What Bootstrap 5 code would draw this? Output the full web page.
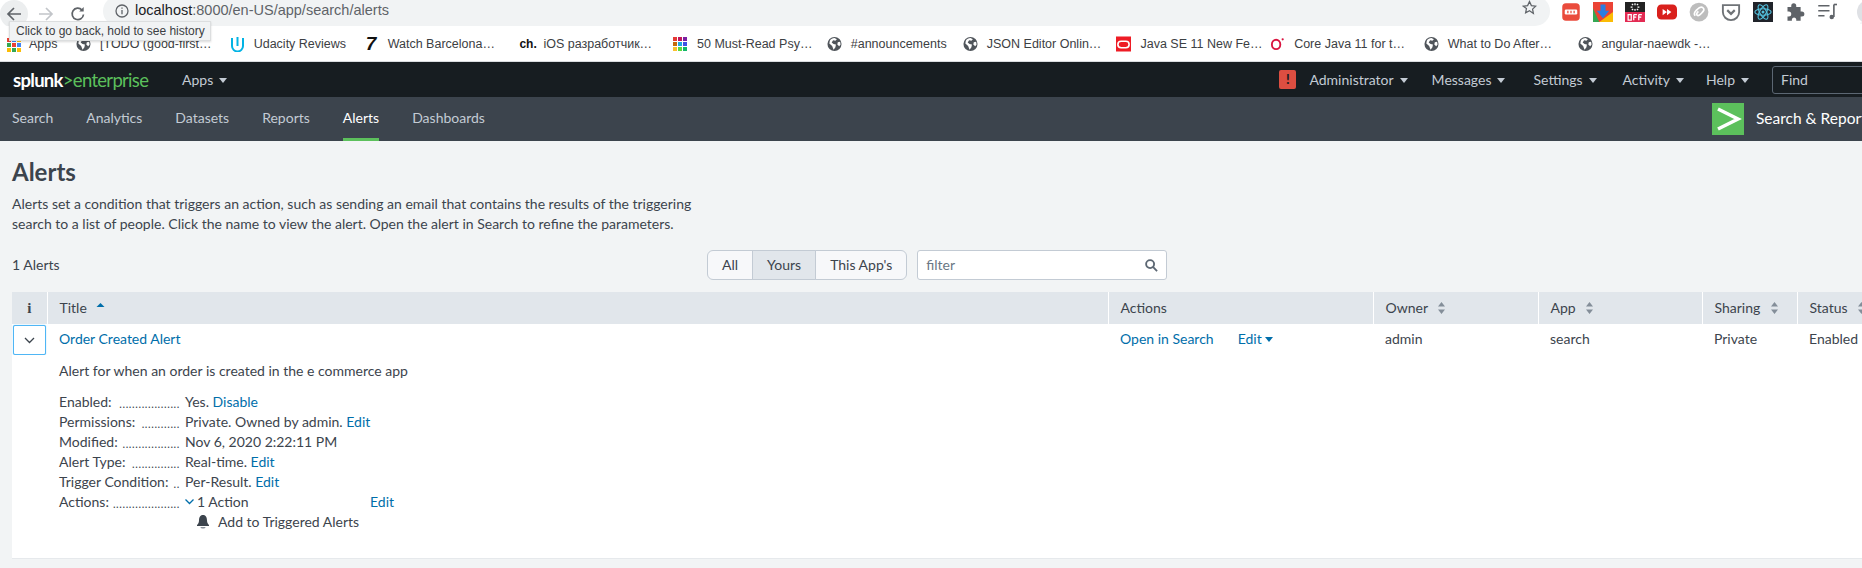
<!DOCTYPE html>
<html lang="en">
<head>
    <meta charset="UTF-8">
    <meta name="viewport" content="width=device-width, initial-scale=1.0">
    <title>Alerts</title>
    <link href="https://cdn.jsdelivr.net/npm/bootstrap@5.3.0/dist/css/bootstrap.min.css" rel="stylesheet">
    <style>
        html, body {
            overflow: hidden;
        }
        body {
            background-color: #f2f4f5;
            color: #3c444d;
            font-family: "Lato", "Liberation Sans", sans-serif;
            font-size: 14px;
            line-height: 20px;
            height: 568px;
        }
        a {
            color: #006eaa;
            text-decoration: none;
        }
        /* browser chrome */
        .browser-bar {
            height: 26px;
            background-color: #fff;
            overflow: hidden;
        }
        .nav-btn {
            width: 28px;
            height: 28px;
            border-radius: 50%;
            flex-shrink: 0;
        }
        .nav-btn-hover {
            background-color: #eceeef;
        }
        .omnibox {
            height: 30px;
            margin: -4px 0 0 11px;
            width: 1447px;
            padding: 4px 13px 0 12px;
            background-color: #f1f3f4;
            border-radius: 15px;
            font-family: "Liberation Sans", sans-serif;
            font-size: 14.5px;
            color: #5f6368;
            flex-shrink: 0;
        }
        .omnibox b {
            font-weight: 400;
            color: #202124;
        }
        .omni-info {
            margin-right: 6px;
        }
        .ext-icons {
            margin-left: 11px;
            gap: 12px;
        }
        .back-tip {
            position: absolute;
            left: 9px;
            top: 21px;
            height: 20px;
            width: 202px;
            padding-left: 6px;
            background-color: #f1f3f4;
            border: 1px solid #dcdedf;
            box-shadow: 0 1px 2px rgba(0, 0, 0, .15);
            font-family: "Liberation Sans", sans-serif;
            font-size: 12px;
            line-height: 18px;
            color: #3c4043;
            white-space: nowrap;
        }
        .bookmarks {
            height: 36px;
            background-color: #fff;
            border-bottom: 1px solid #dadce0;
            padding-left: 7px;
            font-family: "Liberation Sans", sans-serif;
            font-size: 12.5px;
            color: #3c4043;
            white-space: nowrap;
        }
        .bm-item {
            width: 153.7px;
            flex-shrink: 0;
            gap: 9px;
        }
        .bm-apps {
            width: 69px;
            gap: 7px;
        }
        .bm-short { width: 136px; }
        .bm-ico {
            width: 15px;
            height: 16px;
            flex-shrink: 0;
        }
        .bm-seven {
            font-family: "Liberation Sans", sans-serif;
            font-weight: 700;
            font-style: italic;
            font-size: 19px;
            color: #111;
            line-height: 16px;
            margin-right: -2px;
        }
        .bm-ch {
            font-weight: 700;
            font-size: 12px;
            color: #111;
            line-height: 16px;
        }
        /* splunk bars */
        .wide-page {
            width: 1900px;
        }
        .top-bar {
            height: 35px;
            background-color: #171d21;
            color: #c3cbd4;
            font-size: 14px;
            padding-left: 13px;
        }
        .splunk-logo {
            width: 169px;
            color: #5cc05c;
            font-size: 18.5px;
            letter-spacing: -.7px;
            font-family: "Lato", sans-serif;
        }
        .splunk-logo span {
            color: #fff;
            font-weight: 700;
        }
        .caret-down {
            display: inline-block;
            border-left: 4px solid transparent;
            border-right: 4px solid transparent;
            border-top: 5px solid currentColor;
            margin-left: 6px;
            vertical-align: 2px;
        }
        .top-right {
            margin-left: auto;
        }
        .top-item {
            margin-right: 24px;
        }
        .top-item-messages {
            margin-right: 28px;
        }
        .top-item-settings {
            margin-right: 26px;
        }
        .top-item-activity {
            margin-right: 22px;
        }
        .top-item-help {
            margin-right: 23px;
        }
        .alert-flag {
            width: 17px;
            height: 19px;
            border-radius: 2px;
            background-color: #dc4e41;
            color: #171d21;
            font-weight: 900;
            font-size: 13px;
            line-height: 19px;
            text-align: center;
            margin-right: 13px;
        }
        .find-box {
            width: 128px;
            height: 28px;
            border: 1px solid #5c6773;
            border-radius: 3px;
            padding: 3px 8px;
            color: #c3cbd4;
            background-color: #171d21;
        }
        .app-bar {
            height: 44px;
            background-color: #3c444d;
            color: #c3cbd4;
            padding-left: 12px;
            gap: 33px;
        }
        .app-link {
            color: #c3cbd4;
            height: 44px;
            line-height: 42px;
            display: block;
        }
        .app-link-on {
            color: #fff;
            border-bottom: 3px solid #5cc05c;
        }
        .app-label {
            margin-left: auto;
            color: #fff;
            font-size: 15.5px;
            gap: 12px;
            width: 188px;
            white-space: nowrap;
        }
        .app-label span {
            margin-top: -2px;
        }
        .app-logo {
            width: 32px;
            height: 32px;
            background-color: #5cc05c;
            flex-shrink: 0;
        }
        /* page */
        .page-body {
            padding: 17px 0 0 12px;
        }
        .page-title {
            font-size: 24px;
            line-height: 28px;
            font-weight: 700;
            margin-bottom: 8px;
        }
        .page-intro {
            width: 700px;
            margin-bottom: 16px;
        }
        .filter-row {
            height: 30px;
            margin-bottom: 12px;
        }
        .alert-count {
            width: 695px;
        }
        .scope-btn {
            font-size: 14px;
            line-height: 18px;
            padding: 5px 14px;
            color: #3c444d;
            background-color: #f7f8fa;
            border: 1px solid #c3cbd4;
        }
        .scope-btn-on {
            background-color: #e1e6eb;
        }
        .filter-box {
            width: 250px;
            height: 30px;
            margin-left: 10px;
            padding: 0 8px;
            background-color: #fff;
            border: 1px solid #c3cbd4;
            border-radius: 3px;
            color: #6b7785;
        }
        .alerts-table {
            --bs-table-bg: #fff;
            --bs-table-color: #3c444d;
            table-layout: fixed;
            width: 1888px;
            margin: 0;
        }
        .alerts-table > thead > tr > th {
            background-color: #e1e6eb;
            height: 32px;
            padding: 6px 12px;
            font-weight: 400;
            border-bottom: 0;
            border-left: 1px solid #fff;
            white-space: nowrap;
            vertical-align: middle;
        }
        .alerts-table > thead > tr > th:first-child {
            border-left: 0;
            padding: 0;
            text-align: center;
        }
        .alerts-table > tbody > tr > td {
            border-bottom: 0;
            padding: 5px 12px 0;
        }
        .alerts-table > tbody > tr > td:first-child {
            padding: 1px 0 0 1px;
        }
        .col-info { width: 35px; }
        .col-title { width: 1061px; }
        .col-actions { width: 265px; }
        .col-owner { width: 165px; }
        .col-app { width: 164px; }
        .col-sharing { width: 95px; }
        .info-mark {
            font-family: "Liberation Serif", serif;
            font-weight: 700;
            font-size: 15px;
        }
        .sort-ico {
            margin-left: 6px;
            vertical-align: -1px;
        }
        .sort-ico-on {
            vertical-align: 1px;
        }
        .row-toggle {
            width: 33px;
            height: 30px;
            background-color: #fff;
            border: 1px solid #4fb6f5;
            border-radius: 2px;
            box-shadow: 0 0 1px #4fb6f5;
        }
        .alerts-table > tbody > tr.detail-row > td {
            height: 203px;
            padding: 6px 12px 0;
            box-shadow: none;
        }
        .alert-desc {
            margin-bottom: 11px;
        }
        .detail-line {
            height: 20px;
        }
        .detail-key {
            width: 121px;
            margin-right: 5px;
            white-space: nowrap;
        }
        .detail-dots {
            font-size: 11px;
            line-height: 1;
            letter-spacing: .6px;
            align-self: center;
            padding-top: 3px;
        }
        .action-value {
            width: 185px;
            gap: 3px;
        }
        .triggered {
            padding-left: 137px;
        }
        .edit-menu {
            margin-left: 24px;
        }
        .edit-menu .caret-down {
            margin-left: 3px;
        }
        .table-end {
            width: 1888px;
            height: 1px;
            background-color: #e6e9ec;
        }
    </style>
</head>
<body>
    <svg width="0" height="0" class="d-block position-absolute">
        <symbol id="globe" viewBox="0 0 16 16">
            <circle cx="8" cy="8" r="7.5" fill="#50555b"/>
            <path d="M8 1.5 10.5 3 9 4.5 6.5 4 5 6.5l2 1.5 2.500.500L9 11.500 7 14 5.500 10 2.500 7.500 3 4.500C4 2.500 6 1.500 8 1.500ZM11.500 6l2.500-.5.500 3-1.500 2L11 8.500Z" fill="#fff"/>
        </symbol>
    </svg>

    <!-- barra del navegador -->
    <div class="browser-bar d-flex align-items-start">
        <div class="nav-btn nav-btn-hover d-flex align-items-center justify-content-center">
            <svg width="16" height="16" viewBox="0 0 16 16" fill="none" stroke="#5f6368" stroke-width="1.700"><path d="M15 8H2M8 2 2 8l6 6"/></svg>
        </div>
        <div class="nav-btn ms-1 d-flex align-items-center justify-content-center">
            <svg width="16" height="16" viewBox="0 0 16 16" fill="none" stroke="#c2c5c9" stroke-width="1.700"><path d="M1 8h13M8 2l6 6-6 6"/></svg>
        </div>
        <div class="nav-btn ms-1 d-flex align-items-center justify-content-center">
            <svg width="16" height="16" viewBox="0 0 16 16" fill="none" stroke="#5f6368" stroke-width="1.700"><path d="M13.500 8.500A5.700 5.700 0 1 1 12 4"/><path d="M13.700 1v4.500H9.200" fill="#5f6368" stroke="none"/></svg>
        </div>
        <div class="omnibox d-flex align-items-start">
            <svg class="omni-info flex-shrink-0 mt-1" width="14" height="14" viewBox="0 0 14 14" fill="none" stroke="#5f6368" stroke-width="1.300"><circle cx="7" cy="7" r="6"/><path d="M7 6v4.200M7 3.500v1.300"/></svg>
            <span><b>localhost</b>:8000/en-US/app/search/alerts</span>
            <svg class="ms-auto flex-shrink-0" width="15" height="15" viewBox="0 0 24 24" fill="none" stroke="#5f6368" stroke-width="2"><path d="M12 2.500l3 6.400 7 .9-5.100 4.800 1.300 6.900L12 17.200l-6.200 3.300 1.300-6.900L2 9.800l7-.9z"/></svg>
        </div>
        <div class="ext-icons d-flex align-items-center">
            <svg width="20" height="20" viewBox="0 0 14 16"><rect y="1" width="14" height="14" rx="3" fill="#ea4b3c"/><rect x="2" y="6" width="10" height="4" rx="1" fill="#fff"/><path d="M4 7h1v2H4zM6.500 7h1v2h-1zM9 7h1v2H9z" fill="#ea4b3c"/></svg>
            <svg width="20" height="20" viewBox="0 0 16 16"><rect width="16" height="16" fill="#eb4335"/><path d="M0 5 5 16H0z" fill="#34a853"/><path d="M16 8v8H5z" fill="#fbbc05"/><path d="M6 2h4v5h3l-5 6-5-6h3z" fill="#2a7de1"/></svg>
            <svg width="20" height="20" viewBox="0 0 16 16"><rect width="16" height="8" fill="#222"/><rect y="8" width="16" height="8" fill="#e32a52"/><path d="M8 1v1.500M8 5.500V7M4.500 4H6M10 4h1.500M5.500 1.500l1 1M10.500 1.500l-1 1M5.500 6.500l1-1M10.500 6.500l-1-1" stroke="#fff"/><path d="M2.500 10h2.500v4.500H2.500zM7 10h2.500M7 10v4.500M7 12h2M11 10h2.500M11 10v4.500M11 12h2" stroke="#fff" fill="none"/></svg>
            <svg width="20" height="20" viewBox="0 0 16 16"><rect y="2" width="16" height="12" rx="3.500" fill="#d9201c"/><path d="M4.500 5.500 8 8l-3.500 2.500zM8 5.500 11.500 8 8 10.500z" fill="#fff"/></svg>
            <svg width="20" height="20" viewBox="0 0 16 16" fill="none"><circle cx="8" cy="8" r="7.500" fill="#bdbdbd"/><path d="M5 11c-1.500-1.500-.5-3 1-4.500S9 3 11 4.500s.5 3-1 4.500-2.500 2.500-3.500 1.500 0-2 1-3" stroke="#fff" stroke-width="1.400"/></svg>
            <svg width="20" height="20" viewBox="0 0 16 16" fill="none" stroke="#6f7377" stroke-width="1.500"><path d="M1.500 2.500h13v5.500a6.500 6.500 0 0 1-13 0z"/><path d="M5 6.500l3 3 3-3" stroke-width="1.700"/></svg>
            <svg width="20" height="20" viewBox="0 0 16 16" fill="none" stroke="#53c1de" stroke-width=".9"><rect width="16" height="16" fill="#20232a" stroke="none"/><ellipse cx="8" cy="8" rx="6.500" ry="2.600"/><ellipse cx="8" cy="8" rx="6.500" ry="2.600" transform="rotate(60 8 8)"/><ellipse cx="8" cy="8" rx="6.500" ry="2.600" transform="rotate(120 8 8)"/><circle cx="8" cy="8" r="1.200" fill="#53c1de" stroke="none"/></svg>
            <svg width="20" height="20" viewBox="0 0 16 16"><path d="M2 4h3V3a2 2 0 0 1 4 0v1h3.500v3.500h1a2 2 0 0 1 0 4h-1V15H9v-1.200a1.800 1.800 0 0 0-3.500 0V15H2v-3.500h1a2 2 0 0 0 0-4H2z" fill="#5f6368"/></svg>
            <svg width="20" height="20" viewBox="0 0 16 16" fill="none" stroke="#5f6368" stroke-width="1.300"><path d="M1 3h9M1 7h9M1 11h5M13.500 2v10"/><circle cx="11.800" cy="12" r="1.800" fill="#5f6368" stroke="none"/><path d="M13.500 2H16"/></svg>
            <svg class="flex-shrink-0 ms-2" width="24" height="24" viewBox="0 0 24 24"><circle cx="12" cy="12" r="12" fill="#dfe1e5"/><circle cx="12" cy="10" r="5" fill="#f3f4f5"/><path d="M3 24c1-7 17-7 18 0z" fill="#f3f4f5"/></svg>
        </div>
    </div>
    <div class="back-tip">Click to go back, hold to see history</div>

    <!-- marcadores -->
    <div class="bookmarks d-flex align-items-center">
        <div class="bm-item bm-apps d-flex align-items-center">
            <svg class="bm-ico" viewBox="0 0 15 16"><path d="M0 2h4v4H0z" fill="#ea4335"/><path d="M5 2h4v4H5z" fill="#4285f4"/><path d="M10 2h4v4h-4z" fill="#fbbc05"/><path d="M0 7h4v4H0z" fill="#34a853"/><path d="M5 7h4v4H5z" fill="#ea4335"/><path d="M10 7h4v4h-4z" fill="#4285f4"/><path d="M0 12h4v4H0z" fill="#fbbc05"/><path d="M5 12h4v4H5z" fill="#34a853"/><path d="M10 12h4v4h-4z" fill="#fbbc05"/></svg>
            <span>Apps</span>
        </div>
        <div class="bm-item d-flex align-items-center">
            <svg class="bm-ico"><use href="#globe"/></svg>
            <span>[TODO (good-first…</span>
        </div>
        <div class="bm-item bm-short d-flex align-items-center">
            <svg class="bm-ico" viewBox="0 0 15 16" fill="none" stroke="#02b3e4" stroke-width="2"><path d="M2 2v8a5.500 5.500 0 0 0 11 0V2"/><path d="M7.500 1v9"/></svg>
            <span>Udacity Reviews</span>
        </div>
        <div class="bm-item d-flex align-items-center">
            <span class="bm-ico bm-seven">7</span>
            <span>Watch Barcelona…</span>
        </div>
        <div class="bm-item d-flex align-items-center">
            <span class="bm-ico bm-ch">ch.</span>
            <span>iOS разработчик…</span>
        </div>
        <div class="bm-item d-flex align-items-center">
            <svg class="bm-ico" viewBox="0 0 15 16"><path d="M0 1h4v4H0z" fill="#e53935"/><path d="M5 1h4v4H5z" fill="#c2185b"/><path d="M10 1h4v4h-4z" fill="#7b1fa2"/><path d="M0 6h4v4H0z" fill="#c46a0a"/><path d="M5 6h4v4H5z" fill="#1ea7e1"/><path d="M10 6h4v4h-4z" fill="#3f51e5"/><path d="M0 11h4v4H0z" fill="#fbc02d"/><path d="M5 11h4v4H5z" fill="#5dd93b"/><path d="M10 11h4v4h-4z" fill="#12b76a"/></svg>
            <span>50 Must-Read Psy…</span>
        </div>
        <div class="bm-item bm-short d-flex align-items-center">
            <svg class="bm-ico"><use href="#globe"/></svg>
            <span>#announcements</span>
        </div>
        <div class="bm-item d-flex align-items-center">
            <svg class="bm-ico"><use href="#globe"/></svg>
            <span>JSON Editor Onlin…</span>
        </div>
        <div class="bm-item d-flex align-items-center">
            <svg class="bm-ico" viewBox="0 0 16 16"><rect width="16" height="16" fill="#ee1c25"/><rect x="2" y="5" width="12" height="7" rx="3.500" fill="none" stroke="#fff" stroke-width="1.700"/></svg>
            <span>Java SE 11 New Fe…</span>
        </div>
        <div class="bm-item d-flex align-items-center">
            <svg class="bm-ico" viewBox="0 0 16 16" fill="none" stroke="#d9143f" stroke-width="2"><ellipse cx="6.500" cy="8.500" rx="4.500" ry="5"/><circle cx="13.500" cy="3" r="1.200" fill="#d9143f" stroke="none"/></svg>
            <span>Core Java 11 for t…</span>
        </div>
        <div class="bm-item d-flex align-items-center">
            <svg class="bm-ico"><use href="#globe"/></svg>
            <span>What to Do After…</span>
        </div>
        <div class="bm-item d-flex align-items-center">
            <svg class="bm-ico"><use href="#globe"/></svg>
            <span>angular-naewdk -…</span>
        </div>
    </div>

    <div class="wide-page">
        <!-- barra superior de splunk -->
        <div class="top-bar d-flex align-items-center">
            <div class="splunk-logo"><span>splunk</span>&gt;enterprise</div>
            <div>Apps<i class="caret-down"></i></div>
            <div class="top-right d-flex align-items-center">
                <div class="alert-flag">!</div>
                <div class="top-item">Administrator<i class="caret-down"></i></div>
                <div class="top-item-messages">Messages<i class="caret-down"></i></div>
                <div class="top-item-settings">Settings<i class="caret-down"></i></div>
                <div class="top-item-activity">Activity<i class="caret-down"></i></div>
                <div class="top-item-help">Help<i class="caret-down"></i></div>
                <div class="find-box">Find</div>
            </div>
        </div>

        <div class="app-bar d-flex align-items-start">
            <a class="app-link" href="#">Search</a>
            <a class="app-link" href="#">Analytics</a>
            <a class="app-link" href="#">Datasets</a>
            <a class="app-link" href="#">Reports</a>
            <a class="app-link app-link-on" href="#">Alerts</a>
            <a class="app-link" href="#">Dashboards</a>
            <div class="app-label d-flex align-items-center h-100">
                <svg class="app-logo" viewBox="0 0 32 32" fill="none" stroke="#fff" stroke-width="3.500"><path d="M6 6 26 16 6 26"/></svg>
                <span>Search &amp; Reporting</span>
            </div>
        </div>

        <!-- contenido -->
        <div class="page-body">
            <h1 class="page-title">Alerts</h1>
            <p class="page-intro">Alerts set a condition that triggers an action, such as sending an email that contains the results of the triggering search to a list of people. Click the name to view the alert. Open the alert in Search to refine the parameters.</p>

            <div class="filter-row d-flex align-items-center">
                <div class="alert-count">1 Alerts</div>
                <div class="btn-group" role="group">
                    <button type="button" class="btn scope-btn">All</button>
                    <button type="button" class="btn scope-btn scope-btn-on">Yours</button>
                    <button type="button" class="btn scope-btn">This App's</button>
                </div>
                <div class="filter-box d-flex align-items-center justify-content-between">
                    <span>filter</span>
                    <svg width="13" height="13" viewBox="0 0 14 14" fill="none" stroke="#5c6773" stroke-width="2"><circle cx="5.500" cy="5.500" r="4.300"/><path d="M8.800 8.800 13 13"/></svg>
                </div>
            </div>

            <table class="table alerts-table">
                <thead>
                    <tr>
                        <th class="col-info"><span class="info-mark">i</span></th>
                        <th class="col-title">Title
                            <svg class="sort-ico sort-ico-on" width="9" height="10" viewBox="0 0 9 10"><path d="M4.500 1 8.500 5H.5z" fill="#006eaa"/></svg>
                        </th>
                        <th class="col-actions">Actions</th>
                        <th class="col-owner">Owner
                            <svg class="sort-ico" width="9" height="12" viewBox="0 0 9 12"><path d="M4.500 0 8 4.500H1zM4.500 12 1 7.500h7z" fill="#848e99"/></svg>
                        </th>
                        <th class="col-app">App
                            <svg class="sort-ico" width="9" height="12" viewBox="0 0 9 12"><path d="M4.500 0 8 4.500H1zM4.500 12 1 7.500h7z" fill="#848e99"/></svg>
                        </th>
                        <th class="col-sharing">Sharing
                            <svg class="sort-ico" width="9" height="12" viewBox="0 0 9 12"><path d="M4.500 0 8 4.500H1zM4.500 12 1 7.500h7z" fill="#848e99"/></svg>
                        </th>
                        <th>Status
                            <svg class="sort-ico" width="9" height="12" viewBox="0 0 9 12"><path d="M4.500 0 8 4.500H1zM4.500 12 1 7.500h7z" fill="#848e99"/></svg>
                        </th>
                    </tr>
                </thead>
                <tbody>
                    <tr>
                        <td>
                            <div class="row-toggle d-flex align-items-center justify-content-center">
                                <svg width="11" height="7" viewBox="0 0 11 7" fill="none" stroke="#3c444d" stroke-width="1.300"><path d="M1 1l4.500 4.500L10 1"/></svg>
                            </div>
                        </td>
                        <td><a href="#">Order Created Alert</a></td>
                        <td><a href="#">Open in Search</a><a href="#" class="edit-menu">Edit<i class="caret-down"></i></a></td>
                        <td>admin</td>
                        <td>search</td>
                        <td>Private</td>
                        <td>Enabled</td>
                    </tr>
                    <tr class="detail-row">
                        <td></td>
                        <td colspan="6">
                            <div class="alert-desc">Alert for when an order is created in the e commerce app</div>
                            <div class="detail-line d-flex"><div class="detail-key d-flex justify-content-between"><span>Enabled:</span><span class="detail-dots">...................</span></div><div>Yes. <a href="#">Disable</a></div></div>
                            <div class="detail-line d-flex"><div class="detail-key d-flex justify-content-between"><span>Permissions:</span><span class="detail-dots">............</span></div><div>Private. Owned by admin. <a href="#">Edit</a></div></div>
                            <div class="detail-line d-flex"><div class="detail-key d-flex justify-content-between"><span>Modified:</span><span class="detail-dots">..................</span></div><div>Nov 6, 2020 2:22:11 PM</div></div>
                            <div class="detail-line d-flex"><div class="detail-key d-flex justify-content-between"><span>Alert Type:</span><span class="detail-dots">...............</span></div><div>Real-time. <a href="#">Edit</a></div></div>
                            <div class="detail-line d-flex"><div class="detail-key d-flex justify-content-between"><span>Trigger Condition:</span><span class="detail-dots">..</span></div><div>Per-Result. <a href="#">Edit</a></div></div>
                            <div class="detail-line d-flex"><div class="detail-key d-flex justify-content-between"><span>Actions:</span><span class="detail-dots">.....................</span></div>
                                <div class="action-value d-flex align-items-center">
                                    <svg width="9" height="6" viewBox="0 0 9 6" fill="none" stroke="#006eaa" stroke-width="1.300"><path d="M.5.5l4 4 4-4"/></svg>
                                    <span>1 Action</span>
                                </div>
                                <a href="#">Edit</a>
                            </div>
                            <div class="triggered d-flex align-items-center">
                                <svg class="me-2" width="14" height="16" viewBox="0 0 14 16"><path d="M7 1c3 0 4 2.500 4 5.500 0 2 1 3.500 2 4.500v1H1v-1c1-1 2-2.500 2-4.500C3 3.500 4 1 7 1z" fill="#3c444d"/><path d="M4.500 13h5c0 2-5 2-5 0z" fill="#8a929b"/></svg>
                                <span>Add to Triggered Alerts</span>
                            </div>
                        </td>
                    </tr>
                </tbody>
            </table>
            <div class="table-end"></div>
        </div>
    </div>

    <script src="https://cdn.jsdelivr.net/npm/bootstrap@5.3.0/dist/js/bootstrap.bundle.min.js"></script>
</body>
</html>
